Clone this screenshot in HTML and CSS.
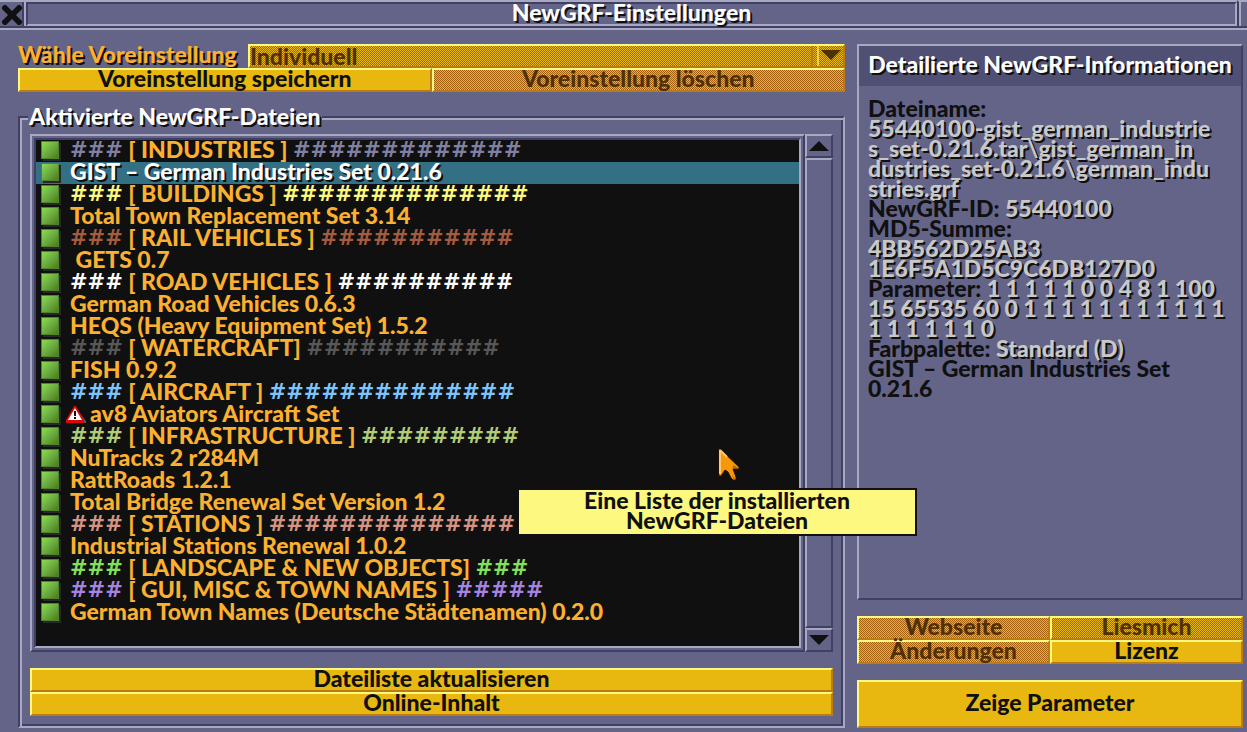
FILE: index.html
```
<!DOCTYPE html>
<html lang="de">
<head>
  <meta charset="UTF-8">
  <title>NewGRF-Einstellungen</title>
  <meta name="viewport" content="width=device-width, initial-scale=1.0">
  <link rel="stylesheet" href="styles.css">
</head>
<body>
  <header class="titlebar">
    <button class="close" type="button" aria-label="Schließen">
      <svg width="20" height="20" viewBox="0 0 20 20"><path d="M0 2L2 0H4L10 6L16 0H18L20 2V4L14 10L20 16V18L18 20H16L10 14L4 20H2L0 18V16L6 10L0 4Z" fill="#101010"/></svg>
    </button>
    <h1>NewGRF-Einstellungen</h1>
    <div class="sticky"></div>
  </header>

  <main>
    <div class="left">
      <!-- Voreinstellungen -->
      <div class="preset">
        <label for="preset">Wähle Voreinstellung</label>
        <div class="dropdown">
          <select id="preset" disabled>
            <option>Individuell</option>
          </select>
          <svg class="arrow" width="20" height="10" viewBox="0 0 20 10"><path d="M0 0H20L10 10Z" fill="#4c3008"/></svg>
        </div>
      </div>
      <div class="pair">
        <button type="button">Voreinstellung speichern</button>
        <button type="button" disabled>Voreinstellung löschen</button>
      </div>

      <!-- Liste der aktiven Dateien -->
      <section class="frame">
        <h2>Aktivierte NewGRF-Dateien</h2>
        <div class="list-wrap">
          <div class="list">
            <ul>
              <li><i class="box"></i><b class="hash c-grey">###</b> [ INDUSTRIES ] <b class="hash c-grey">#############</b></li>
              <li class="selected"><i class="box"></i>GIST – German Industries Set 0.21.6</li>
              <li><i class="box"></i><b class="hash c-yellow">###</b> [ BUILDINGS ] <b class="hash c-yellow">##############</b></li>
              <li><i class="box"></i>Total Town Replacement Set 3.14</li>
              <li><i class="box"></i><b class="hash c-brown">###</b> [ RAIL VEHICLES ] <b class="hash c-brown">###########</b></li>
              <li><i class="box"></i>&nbsp;GETS 0.7</li>
              <li><i class="box"></i><b class="hash c-white">###</b> [ ROAD VEHICLES ] <b class="hash c-white">##########</b></li>
              <li><i class="box"></i>German Road Vehicles 0.6.3</li>
              <li><i class="box"></i>HEQS (Heavy Equipment Set) 1.5.2</li>
              <li><i class="box"></i><b class="hash c-dark">###</b> [ WATERCRAFT] <b class="hash c-dark">###########</b></li>
              <li><i class="box"></i>FISH 0.9.2</li>
              <li><i class="box"></i><b class="hash c-blue">###</b> [ AIRCRAFT ] <b class="hash c-blue">##############</b></li>
              <li class="warned"><i class="box"></i><svg class="warn" width="20" height="18" viewBox="0 0 20 18"><path d="M10 2L20 15V17H3Z" fill="#585858"/><path d="M8 0H10L18 14V17H0V14Z" fill="#d80808"/><path d="M9 2L16 14H2Z" fill="#fcfcfc"/><path d="M8 5H10V10H8ZM8 11H10V13H8Z" fill="#101010"/></svg>av8 Aviators Aircraft Set</li>
              <li><i class="box"></i><b class="hash c-olive">###</b> [ INFRASTRUCTURE ] <b class="hash c-olive">#########</b></li>
              <li><i class="box"></i>NuTracks 2 r284M</li>
              <li><i class="box"></i>RattRoads 1.2.1</li>
              <li><i class="box"></i>Total Bridge Renewal Set Version 1.2</li>
              <li><i class="box"></i><b class="hash c-pink">###</b> [ STATIONS ] <b class="hash c-pink">##############</b></li>
              <li><i class="box"></i>Industrial Stations Renewal 1.0.2</li>
              <li><i class="box"></i><b class="hash c-green">###</b> [ LANDSCAPE &amp; NEW OBJECTS] <b class="hash c-green">###</b></li>
              <li><i class="box"></i><b class="hash c-violet">###</b> [ GUI, MISC &amp; TOWN NAMES ] <b class="hash c-violet">#####</b></li>
              <li><i class="box"></i>German Town Names (Deutsche Städtenamen) 0.2.0</li>
            </ul>
          </div>
          <div class="scrollbar">
            <button class="grey" type="button" aria-label="Nach oben"><svg width="20" height="10" viewBox="0 0 20 10"><path d="M10 0L20 10H0Z" fill="#101010"/></svg></button>
            <div class="track"></div>
            <button class="grey" type="button" aria-label="Nach unten"><svg width="20" height="10" viewBox="0 0 20 10"><path d="M0 0H20L10 10Z" fill="#101010"/></svg></button>
          </div>
        </div>
        <div class="stack">
          <button type="button">Dateiliste aktualisieren</button>
          <button type="button">Online-Inhalt</button>
        </div>
      </section>
    </div>

    <div class="right">
      <section class="info">
        <h2>Detailierte NewGRF-Informationen</h2>
        <p>
          Dateiname:<br>
          <span>55440100-gist_german_industrie<br>s_set-0.21.6.tar\gist_german_in<br>dustries_set-0.21.6\german_indu<br>stries.grf</span><br>
          NewGRF-ID: <span>55440100</span><br>
          MD5-Summe:<br>
          <span>4BB562D25AB3<br>1E6F5A1D5C9C6DB127D0</span><br>
          Parameter: <span>1 1 1 1 1 0 0 4 8 1 100<br>15 65535 60 0 1 1 1 1 1 1 1 1 1 1 1<br>1 1 1 1 1 1 0</span><br>
          Farbpalette: <span>Standard (D)</span><br>
          GIST – German Industries Set<br>0.21.6
        </p>
      </section>
      <div class="links">
        <button type="button" disabled>Webseite</button>
        <button type="button" disabled>Liesmich</button>
        <button type="button" disabled>Änderungen</button>
        <button type="button">Lizenz</button>
      </div>
      <button class="big" type="button">Zeige Parameter</button>
    </div>
  </main>

  <!-- Mauszeiger und Tooltip -->
  <svg class="cursor" width="24" height="36" viewBox="0 0 24 36"><path d="M1 1L21 20V22H15L18 30V33H15L13 31L10 25L7 23L3 29H1Z" fill="#f89808" stroke="#301000" stroke-width="1"/><path d="M16 18L20 21H14ZM14 28L17 32H15Z" fill="#b86c10"/><path d="M2 3V27M2 3L9 10" stroke="#fcc870" stroke-width="2"/></svg>
  <div class="tooltip" role="tooltip">Eine Liste der installierten<br>NewGRF-Dateien</div>
</body>
</html>
```
FILE: styles.css
```
:root {
  --base: #646488;
  --light: #a8a8c0;
  --dark: #404064;
  --gold: #e8b810;
  --gold-light: #fcf880;
  --gold-dark: #bc7c14;
  --black: #101010;
}
* {
  box-sizing: border-box;
}
body {
  margin: 0;
  min-height: 100vh;
  display: flex;
  flex-direction: column;
  background: var(--base);
  color: var(--black);
  font: 900 23px/20px Lato, sans-serif;
}
h1, h2, p, ul {
  margin: 0;
  padding: 0;
  font-size: 23px;
  font-weight: 900;
}
h1, h2, label {
  color: #fcfcfc;
  text-shadow: 2px 2px var(--black);
}

/* Titelleiste */
.titlebar {
  display: flex;
  height: 28px;
  border-bottom: 2px solid var(--dark);
}
.titlebar h1 {
  flex: 1;
  line-height: 16px;
  text-align: center;
  border: 2px solid;
  border-color: var(--dark) var(--light) var(--light) var(--dark);
  box-shadow: 0 -2px var(--light);
  margin-top: 2px;
}
.close {
  width: 26px;
  height: 26px;
  padding: 2px 0 0 2px;
  background: var(--base);
  border: 0;
  border-top: 2px solid var(--light);
  border-right: 2px solid var(--light);
  box-shadow: inset -2px 0 var(--dark);
  text-align: left;
}
.close svg {
  display: block;
}
.sticky {
  width: 10px;
  border: 2px solid var(--light);
  border-width: 2px 0 0 2px;
  border-left-color: var(--dark);
  box-shadow: inset 2px 0 var(--light);
}

main {
  flex: 1;
  display: grid;
  grid-template-columns: 1fr 386px;
  gap: 12px;
  padding: 14px 4px 4px 18px;
  border-top: 2px solid var(--light);
}
.left, .right {
  display: flex;
  flex-direction: column;
}

/* Knöpfe */
button {
  height: 24px;
  padding: 0 0 4px;
  border: 2px solid;
  border-color: var(--gold-light) var(--gold-dark) var(--gold-dark) var(--gold-light);
  background: var(--gold);
  color: var(--black);
  font: inherit;
  line-height: 16px;
}
button:disabled, select:disabled {
  background: repeating-conic-gradient(#a4600c 0 25%, var(--gold) 0 50%) 0 0 / 2px 2px;
  color: #503008;
  opacity: 1;
}
.preset {
  display: grid;
  grid-template-columns: 230px 1fr;
}
.preset label {
  color: #fcb030;
}
.dropdown {
  position: relative;
}
select {
  display: block;
  width: 100%;
  height: 24px;
  padding: 0;
  border: 2px solid;
  border-color: var(--gold-light) var(--gold-dark) var(--gold-dark) var(--gold-light);
  border-radius: 0;
  appearance: none;
  font: inherit;
}
.dropdown::after {
  content: "";
  position: absolute;
  top: 2px;
  bottom: 2px;
  right: 26px;
  width: 4px;
  border-left: 2px solid var(--gold-dark);
  border-right: 2px solid #e8d050;
}
.arrow {
  position: absolute;
  top: 6px;
  right: 4px;
}
.pair {
  display: grid;
  grid-template-columns: 1fr 1fr;
}
.pair button:disabled {
  background-position: 1px 0;
}

/* Rahmen mit Dateiliste */
.frame {
  flex: 1;
  display: flex;
  flex-direction: column;
  margin-top: 24px;
  padding: 0 10px 10px;
  border: 2px solid;
  border-color: var(--dark) var(--light) var(--light) var(--dark);
  box-shadow: inset 2px 2px var(--light), inset -2px -2px var(--dark);
}
.frame h2 {
  align-self: flex-start;
  margin: -12px 0 8px -2px;
  padding: 0 1px;
  background: var(--base);
}
.list-wrap {
  flex: 1;
  display: flex;
}
.list {
  flex: 1;
  padding: 2px;
  border: 2px solid;
  border-color: var(--light) var(--dark) var(--dark) var(--light);
}
.list ul {
  height: 100%;
  border: 2px solid;
  border-color: var(--dark) var(--light) var(--light) var(--dark);
  background: var(--black);
  color: #fcb030;
  list-style: none;
}
.list li {
  display: flex;
  height: 22px;
  line-height: 18px;
  white-space: pre;
}
.list .selected {
  background: #347084;
  color: #fcfcfc;
  text-shadow: 2px 2px var(--black);
}
.box {
  width: 18px;
  height: 18px;
  margin: 1px 11px 0 5px;
  border: 1px solid #50842c;
  background: linear-gradient(135deg, #8cdc50, #68a840 55%, #4c7c10);
  box-shadow: 2px 2px #282828;
}
.warned .box {
  margin-right: 7px;
}
.warn {
  margin: 2px 4px 0 0;
}
.hash {
  font: bold 21px/20px "DejaVu Sans", sans-serif;
}
.c-grey { color: #8080a4; }
.c-yellow { color: #fcf880; }
.c-brown { color: #a45c40; }
.c-white { color: #fcfcfc; }
.c-dark { color: #585858; }
.c-blue { color: #7cc4fc; }
.c-olive { color: #b0cc78; }
.c-pink { color: #d49484; }
.c-green { color: #84e05c; }
.c-violet { color: #a484e0; }

.scrollbar {
  display: flex;
  flex-direction: column;
  width: 28px;
}
.grey, .track {
  background: var(--base);
  border: 2px solid;
  border-color: var(--light) var(--dark) var(--dark) var(--light);
}
.grey {
  padding: 0;
}
.grey svg {
  display: block;
  margin: 0 auto;
}
.track {
  flex: 1;
}
.stack {
  display: grid;
  margin-top: 16px;
}

/* Rechte Spalte */
.info {
  flex: 1;
  border: 2px solid;
  border-color: var(--light) var(--dark) var(--dark) var(--light);
}
.info h2 {
  padding: 8px 0 12px;
  background: #505074;
  text-align: center;
  white-space: nowrap;
}
.info p {
  padding: 12px 0 0 9px;
  white-space: nowrap;
}
.info span {
  color: #c8c8c8;
  text-shadow: 2px 2px var(--black);
}
.links {
  display: grid;
  grid-template-columns: 1fr 1fr;
  margin: 16px 0;
}
.big {
  height: 48px;
}

.cursor {
  position: absolute;
  left: 718px;
  top: 447px;
}
.tooltip {
  position: absolute;
  left: 517px;
  top: 488px;
  width: 400px;
  height: 48px;
  border: 2px solid var(--black);
  background: #fcf880;
  text-align: center;
}
```
